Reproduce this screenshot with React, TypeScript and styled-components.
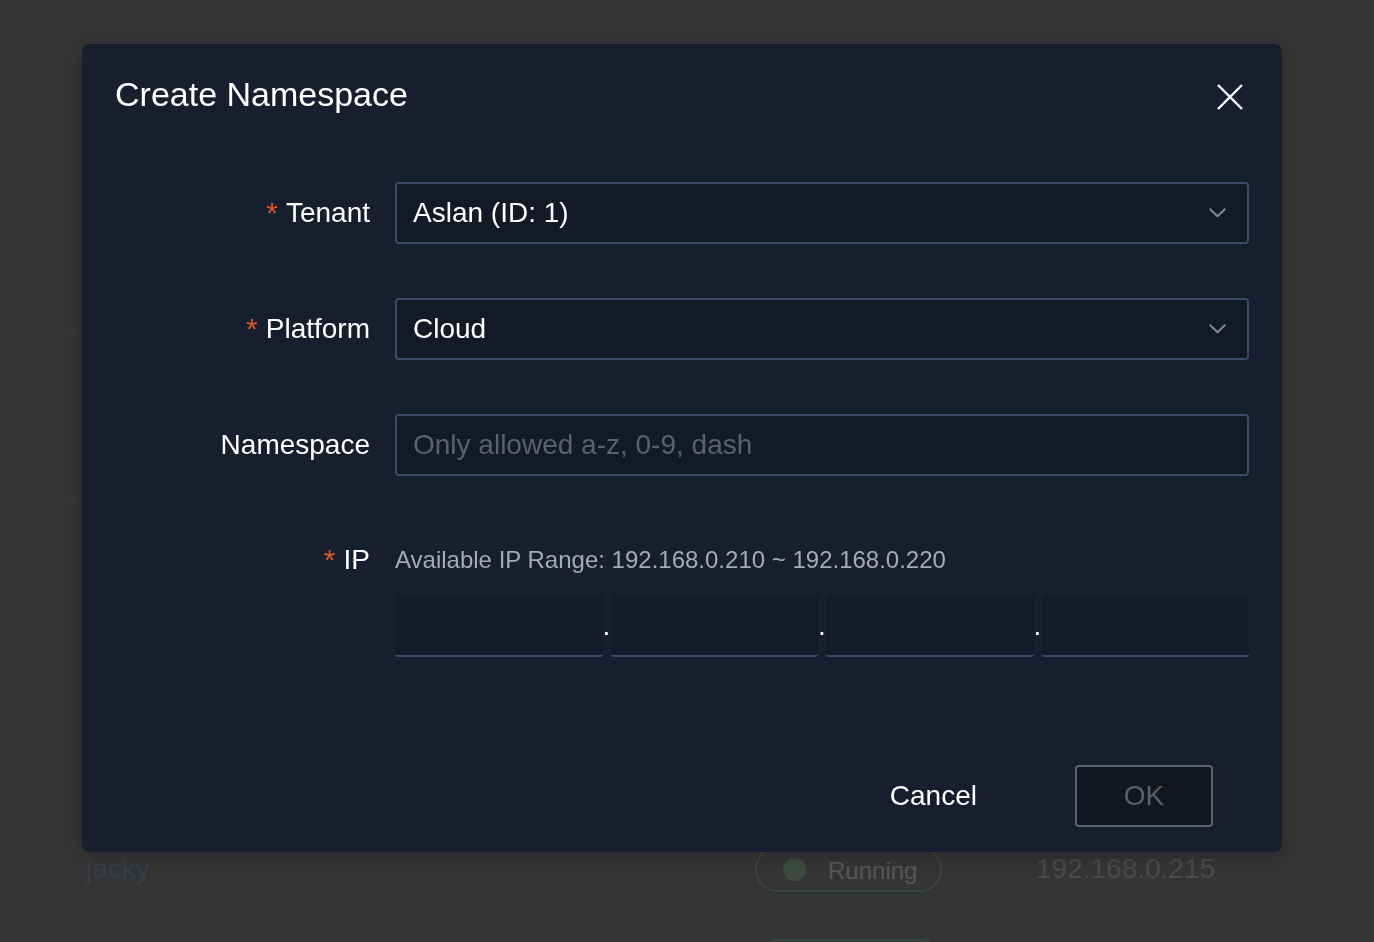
import React from "react";
import styled, { createGlobalStyle } from "styled-components";

const GlobalStyle = createGlobalStyle`
  html, body {
    margin: 0;
    padding: 0;
    background: #353535;
    font-family: "Liberation Sans", Arial, Helvetica, sans-serif;
    overflow: hidden;
  }
  * { box-sizing: border-box; }
`;

const Page = styled.div`
  width: 1374px;
  height: 942px;
  display: flex;
  flex-direction: column;
  background: #353535;
  overflow: hidden;
`;

const Band = styled.div<{ $h: number; $line?: boolean }>`
  height: ${(p) => p.$h}px;
  flex: none;
  border-bottom: 1px solid ${(p) => (p.$line ? "#393939" : "transparent")};
`;

const DataRow = styled.div`
  height: 92px;
  flex: none;
  display: grid;
  grid-template-columns: 669px 281px 1fr;
  align-items: center;
  padding-left: 86px;
`;

const NameCell = styled.span`
  font-size: 28px;
  color: #373e4c;
`;

const StatusPill = styled.span`
  display: inline-flex;
  align-items: center;
  gap: 22px;
  width: 187px;
  height: 45px;
  padding-left: 26px;
  padding-top: 3px;
  border: 2px solid #3a473b;
  border-radius: 23px;
  font-size: 24px;
  color: #555858;
`;

const StatusDot = styled.span`
  width: 23px;
  height: 23px;
  margin-top: -3px;
  border-radius: 50%;
  background: #3b4c3d;
`;

const IpCell = styled.span`
  font-size: 28px;
  color: #4a4a4a;
`;

/* ---------- modal ---------- */

const Overlay = styled.div`
  position: fixed;
  inset: 0;
  display: flex;
  align-items: flex-start;
  justify-content: flex-start;
  padding: 44px 0 0 82px;
`;

const Modal = styled.div`
  width: 1200px;
  background: #151f2d;
  border-radius: 8px;
  box-shadow: 0 4px 20px rgba(0, 0, 0, 0.25);
  display: flex;
  flex-direction: column;
  color: #ffffff;
`;

const Header = styled.div`
  display: flex;
  justify-content: space-between;
  align-items: flex-start;
  padding: 30px 39px 0 33px;
`;

const Title = styled.h2`
  margin: 0;
  font-size: 34px;
  line-height: 40px;
  font-weight: 400;
  color: #ffffff;
`;

const CloseButton = styled.button`
  margin-top: 10px;
  width: 26px;
  height: 26px;
  padding: 0;
  border: none;
  background: transparent;
  display: flex;
  cursor: pointer;
`;

const Form = styled.div`
  margin-top: 68px;
  padding: 0 33px;
  display: grid;
  grid-template-columns: 255px 854px;
  column-gap: 25px;
  row-gap: 54px;
`;

const Label = styled.label<{ $top?: boolean }>`
  display: flex;
  justify-content: flex-end;
  align-items: ${(p) => (p.$top ? "flex-start" : "center")};
  font-size: 28px;
  line-height: ${(p) => (p.$top ? "60px" : "normal")};
  color: #ffffff;
  white-space: nowrap;
`;

const Required = styled.span`
  color: #e2532f;
  font-size: 30px;
  margin-right: 8px;
`;

const SelectBox = styled.div`
  height: 62px;
  display: flex;
  align-items: center;
  justify-content: space-between;
  padding: 0 21px 0 16px;
  background: #121a28;
  border: 2px solid #3b4a68;
  border-radius: 4px;
  font-size: 28px;
  color: #ffffff;
`;

const TextInput = styled.input`
  height: 62px;
  width: 100%;
  padding: 0 16px;
  background: #121a28;
  border: 2px solid #3b4a68;
  border-radius: 4px;
  font-family: inherit;
  font-size: 28px;
  color: #ffffff;
  outline: none;
  &::placeholder {
    color: #59616f;
  }
`;

const IpField = styled.div`
  display: flex;
  flex-direction: column;
`;

const Hint = styled.div`
  font-size: 24px;
  line-height: 60px;
  color: #a3abb9;
  margin-bottom: 4px;
`;

const IpRow = styled.div`
  display: flex;
  height: 63px;
`;

const IpPart = styled.input`
  flex: 1;
  min-width: 0;
  height: 63px;
  background: #131b29;
  border: none;
  border-bottom: 2px solid #3a4a68;
  border-radius: 3px;
  font-family: inherit;
  font-size: 28px;
  color: #ffffff;
  outline: none;
`;

const IpDot = styled.span`
  width: 8px;
  flex: none;
  display: flex;
  justify-content: center;
  font-size: 28px;
  line-height: 63px;
  color: #ffffff;
`;

const Footer = styled.div`
  margin-top: 108px;
  display: flex;
  justify-content: flex-end;
  gap: 72px;
  padding: 0 69px 25px 0;
`;

const Button = styled.button<{ $primary?: boolean }>`
  min-width: 138px;
  height: 62px;
  padding: 0 24px;
  font-family: inherit;
  font-size: 28px;
  border-radius: 4px;
  cursor: pointer;
  color: ${(p) => (p.$primary ? "#5a5f6b" : "#ffffff")};
  background: ${(p) => (p.$primary ? "#111620" : "transparent")};
  border: 2px solid ${(p) => (p.$primary ? "#5a5f6a" : "transparent")};
`;

const Chevron = () => (
  <svg width="17" height="10" viewBox="0 0 17 10" fill="none">
    <path d="M1.2 1.2 L8.5 8.3 L15.8 1.2" stroke="#7f8898" strokeWidth="2" strokeLinecap="round" strokeLinejoin="round" />
  </svg>
);

const CloseIcon = () => (
  <svg width="26" height="26" viewBox="0 0 26 26" fill="none">
    <path d="M1 1 L25 25 M25 1 L1 25" stroke="#ffffff" strokeWidth="2.4" />
  </svg>
);

export default function App() {
  return (
    <>
      <GlobalStyle />
      <Page>
        <Band $h={330} $line />
        <Band $h={170} $line />
        <Band $h={323} />
        <DataRow>
          <NameCell>jacky</NameCell>
          <StatusPill>
            <StatusDot />
            Running
          </StatusPill>
          <IpCell>192.168.0.215</IpCell>
        </DataRow>
        <DataRow>
          <span />
          <StatusPill />
          <span />
        </DataRow>
      </Page>
      <Overlay>
        <Modal>
          <Header>
            <Title>Create Namespace</Title>
            <CloseButton aria-label="Close">
              <CloseIcon />
            </CloseButton>
          </Header>
          <Form>
            <Label>
              <Required>*</Required>Tenant
            </Label>
            <SelectBox>
              <span>Aslan (ID: 1)</span>
              <Chevron />
            </SelectBox>

            <Label>
              <Required>*</Required>Platform
            </Label>
            <SelectBox>
              <span>Cloud</span>
              <Chevron />
            </SelectBox>

            <Label>Namespace</Label>
            <TextInput placeholder="Only allowed a-z, 0-9, dash" />

            <Label $top>
              <Required>*</Required>IP
            </Label>
            <IpField>
              <Hint>Available IP Range: 192.168.0.210 ~ 192.168.0.220</Hint>
              <IpRow>
                <IpPart />
                <IpDot>.</IpDot>
                <IpPart />
                <IpDot>.</IpDot>
                <IpPart />
                <IpDot>.</IpDot>
                <IpPart />
              </IpRow>
            </IpField>
          </Form>
          <Footer>
            <Button>Cancel</Button>
            <Button $primary>OK</Button>
          </Footer>
        </Modal>
      </Overlay>
    </>
  );
}
